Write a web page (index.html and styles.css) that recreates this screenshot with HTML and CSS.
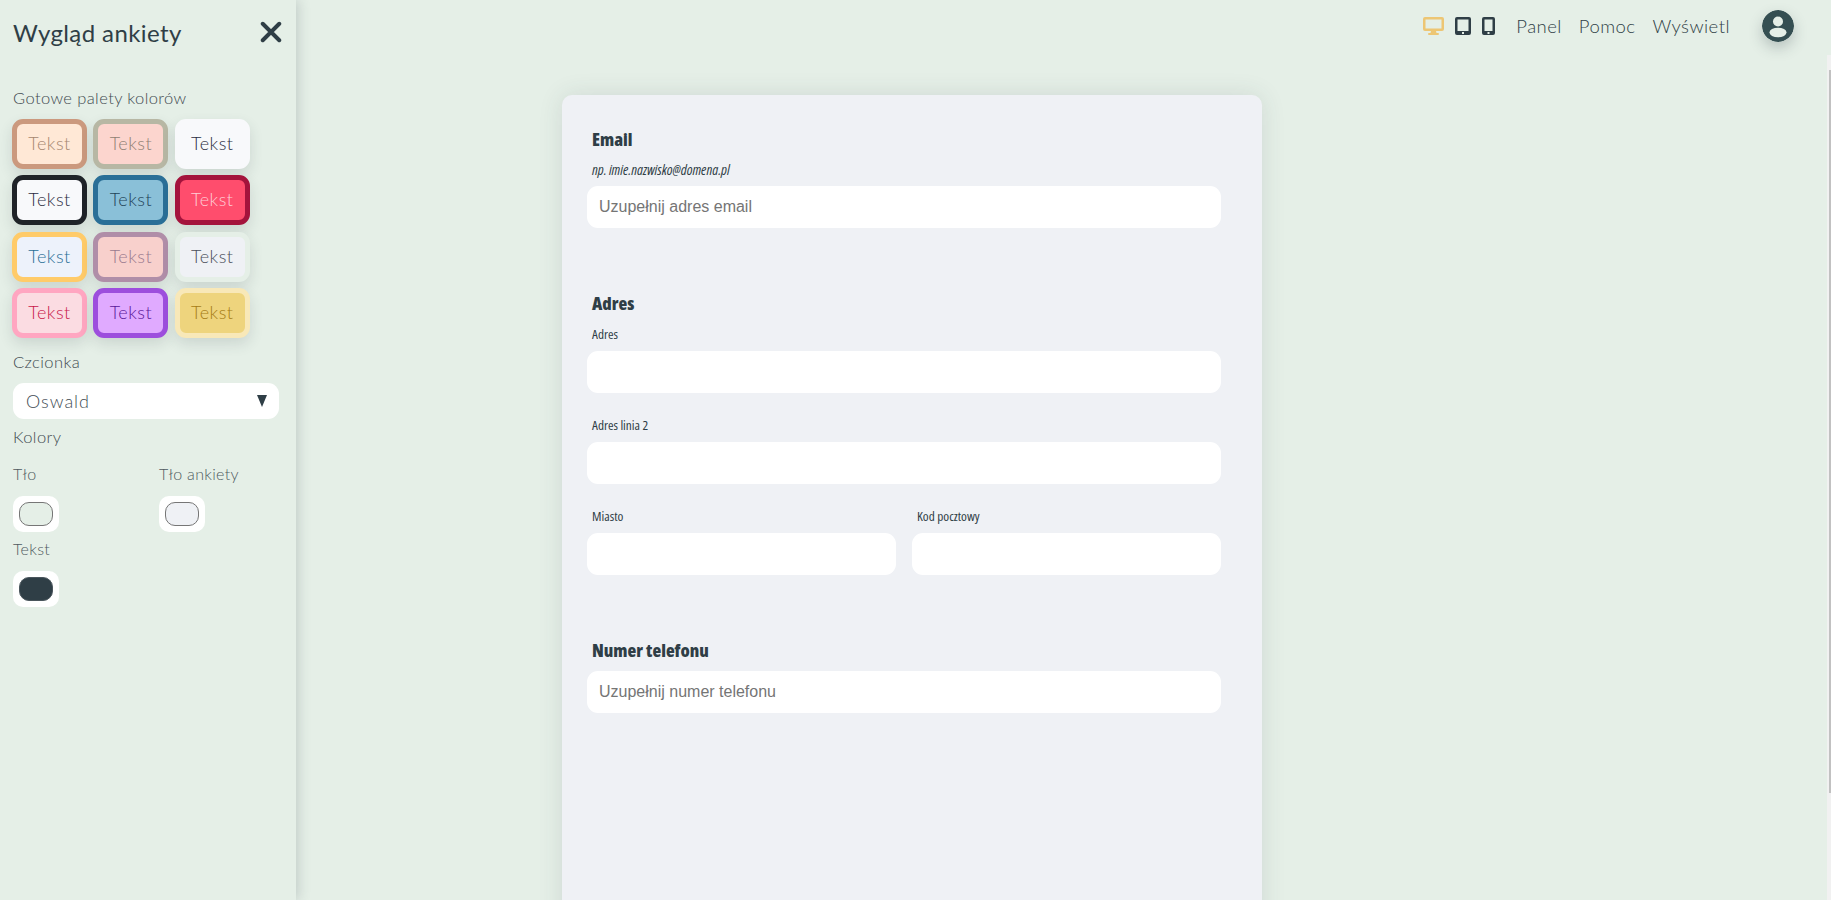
FILE: index.html
```html
<!DOCTYPE html>
<html lang="pl">
<head>
<meta charset="utf-8">
<title>Wygląd ankiety</title>
<link rel="stylesheet" href="styles.css">
</head>
<body>
<div class="app">
  <aside class="sidebar">
    <header class="side-head">
      <h1 class="side-title">Wygląd ankiety</h1>
      <svg class="close" viewBox="0 0 20 20" width="22" height="22"><path d="M2.5 2.5 17.5 17.5M17.5 2.5 2.5 17.5" fill="none" stroke="#2f3e46" stroke-width="3.6" stroke-linecap="round"/></svg>
    </header>
    <p class="side-label first">Gotowe palety kolorów</p>
    <div class="palettes">
      <div class="pal p1">Tekst</div><div class="pal p2">Tekst</div><div class="pal p3">Tekst</div>
      <div class="pal p4">Tekst</div><div class="pal p5">Tekst</div><div class="pal p6">Tekst</div>
      <div class="pal p7">Tekst</div><div class="pal p8">Tekst</div><div class="pal p9">Tekst</div>
      <div class="pal p10">Tekst</div><div class="pal p11">Tekst</div><div class="pal p12">Tekst</div>
    </div>
    <p class="side-label font-label">Czcionka</p>
    <div class="select"><span>Oswald</span><span class="arrow"></span></div>
    <p class="side-label colors-label">Kolory</p>
    <div class="colors">
      <div class="color"><p class="color-name">Tło</p><div class="chip"><div class="chip-in c-bg"></div></div></div>
      <div class="color"><p class="color-name">Tło ankiety</p><div class="chip"><div class="chip-in c-card"></div></div></div>
      <div class="color"><p class="color-name">Tekst</p><div class="chip"><div class="chip-in c-text"></div></div></div>
    </div>
  </aside>
  <div class="main">
    <nav class="topbar">
      <div class="devices">
        <svg class="dev" width="21" height="18" viewBox="0 0 21 18"><path fill="#edc674" fill-rule="evenodd" d="M2 0h17a2 2 0 0 1 2 2v10a2 2 0 0 1-2 2h-6l.5 2H15a1 1 0 0 1 0 2H6a1 1 0 0 1 0-2h1.500L8 14H2a2 2 0 0 1-2-2V2a2 2 0 0 1 2-2Zm.5 2.500V11.500h16V2.500Z"/></svg>
        <svg class="dev" width="16" height="18" viewBox="0 0 16 18"><path fill="#2f3e46" fill-rule="evenodd" d="M2 0h12a2 2 0 0 1 2 2v14a2 2 0 0 1-2 2H2a2 2 0 0 1-2-2V2a2 2 0 0 1 2-2Zm.5 2.500V14h11V2.500ZM7 15h2v2H7Z"/></svg>
        <svg class="dev" width="13" height="18" viewBox="0 0 13 18"><path fill="#2f3e46" fill-rule="evenodd" d="M2 0h9a2 2 0 0 1 2 2v14a2 2 0 0 1-2 2H2a2 2 0 0 1-2-2V2a2 2 0 0 1 2-2Zm.5 2.500V14h8V2.500ZM5.500 15h2v2h-2Z"/></svg>
      </div>
      <a class="nav-link">Panel</a>
      <a class="nav-link">Pomoc</a>
      <a class="nav-link">Wyświetl</a>
      <svg class="avatar" width="32" height="32" viewBox="0 0 32 32"><circle cx="16" cy="16" r="16" fill="#354f52"/><circle cx="16" cy="11.500" r="5" fill="#e5efe7"/><ellipse cx="16" cy="22.500" rx="8.500" ry="4.800" fill="#e5efe7"/></svg>
    </nav>
    <main class="card">
      <section class="block email">
        <h2 class="q-title">Email</h2>
        <p class="hint">np. imie.nazwisko@domena.pl</p>
        <div class="input">Uzupełnij adres email</div>
      </section>
      <section class="block adres">
        <h2 class="q-title">Adres</h2>
        <label class="sub">Adres</label>
        <div class="input"></div>
        <label class="sub">Adres linia 2</label>
        <div class="input"></div>
        <div class="two">
          <div class="col"><label class="sub">Miasto</label><div class="input"></div></div>
          <div class="col"><label class="sub">Kod pocztowy</label><div class="input"></div></div>
        </div>
      </section>
      <section class="block phone">
        <h2 class="q-title">Numer telefonu</h2>
        <div class="input">Uzupełnij numer telefonu</div>
      </section>
    </main>
  </div>
  <div class="scrollbar"><div class="thumb"></div></div>
</div>
</body>
</html>
```

FILE: styles.css
```css
* { box-sizing: border-box; }
html, body { margin: 0; height: 100%; overflow: hidden; }
body { background: #e5efe7; color: #2f3e46; font-family: "Lato", "Liberation Sans", sans-serif; }
p, h1, h2 { margin: 0; }

.app { display: flex; height: 900px; position: relative; overflow: hidden; }

.sidebar {
  width: 296px; flex: none; height: 900px; padding: 0 13px;
  background: #e5efe7; box-shadow: 2px 0 12px rgba(47, 62, 70, .2);
  position: relative; z-index: 2;
}
.side-head { display: flex; align-items: center; justify-content: space-between; height: 64px; padding-right: 1px; }
.side-title { font-family: "Lato", sans-serif; font-size: 24px; font-weight: 400; letter-spacing: .4px; }
.close { margin-top: -1px; }
.side-label { font-size: 16.500px; font-weight: 300; line-height: 20px; color: #3f4a50; letter-spacing: .4px; }
.first { margin-top: 24px; }

.palettes { display: grid; grid-template-columns: repeat(3, 75px); grid-auto-rows: 50px; gap: 6.330px 6.400px; margin: 11px 0 0 -1px; }
.pal {
  border: 5px solid; border-radius: 11px; display: flex; align-items: center; justify-content: center;
  padding-bottom: 2px;
  font-size: 18px; font-weight: 300; letter-spacing: .5px; box-shadow: 0 6px 14px rgba(47, 62, 70, .14);
}
.p1 { background: #ffe8d6; border-color: #cb997e; color: #a5866f; }
.p2 { background: #fcd5ce; border-color: #b7b7a4; color: #8f7f74; }
.p3 { background: #f8f9fb; border-color: #f8f9fb; color: #2b2d42; }
.p4 { background: #f8f9fb; border-color: #1f2328; color: #2b2d42; }
.p5 { background: #8ac0d8; border-color: #2a6f97; color: #1f4458; }
.p6 { background: #ff4d6d; border-color: #a4133c; color: #ffccd5; }
.p7 { background: #edf2fb; border-color: #ffcb69; color: #2a6f97; }
.p8 { background: #f8d0cc; border-color: #b08ea8; color: #9a7b8f; }
.p9 { background: #eff1f5; border-color: #e5efe7; color: #4a4e5a; }
.p10 { background: #fbdce2; border-color: #ffa6c1; color: #c9184a; }
.p11 { background: #e0aaff; border-color: #9d4edd; color: #5a189a; }
.p12 { background: #eed47d; border-color: #f8e8b8; color: #a67c15; }

.font-label { margin-top: 14px; }
.select {
  display: flex; align-items: center; justify-content: space-between;
  width: 266px; height: 36px; margin-top: 11px; padding: 0 12px 0 13px;
  background: #fff; border-radius: 11px; font-size: 18px; font-weight: 300; letter-spacing: 1px; color: #3f4d55;
}
.arrow { width: 0; height: 0; border-left: 5.500px solid transparent; border-right: 5.500px solid transparent; border-top: 12px solid #2f3e46; }
.colors-label { margin-top: 8px; }
.colors { display: grid; grid-template-columns: 146px 1fr; }
.color-name { font-size: 16px; font-weight: 300; line-height: 20px; color: #4f5a60; letter-spacing: .3px; margin-top: 17px; }
.color:nth-child(3) .color-name { margin-top: 7px; }
.chip { width: 46px; height: 36px; margin-top: 12px; padding: 6px; background: #fff; border-radius: 10px; }
.chip-in { width: 34px; height: 24px; border: 1px solid #767676; border-radius: 10px; }
.c-bg { background: #e5efe7; }
.c-card { background: #eff1f5; }
.c-text { background: #2f3e46; border-color: #4a555c; }

.main { flex: 1; min-width: 0; position: relative; }
.topbar { display: flex; align-items: center; justify-content: flex-end; height: 52px; padding-right: 37px; }
.devices { display: flex; align-items: center; gap: 11px; margin-right: 21px; }
.dev { display: block; }
.nav-link { font-size: 18.500px; font-weight: 300; color: #2f3e46; margin-right: 17px; letter-spacing: .45px; }
.nav-link:nth-of-type(3) { margin-right: 32px; }
.avatar { border-radius: 50%; box-shadow: 0 6px 14px rgba(47, 62, 70, .25); }

.card {
  width: 700px; height: 900px; margin: 43px 0 0 266px; padding: 30px 41px 0 25px;
  background: #eff1f5; border-radius: 10px 10px 0 0; box-shadow: 0 0 24px rgba(47, 62, 70, .12);
}
.block { display: flex; flex-direction: column; }
.q-title { font-family: "Open Sans", "Noto Sans", sans-serif; font-stretch: 75%; font-size: 18px; font-weight: 800; line-height: 28px; margin-left: 5px; }
.hint { font-family: "Open Sans", "Noto Sans", sans-serif; font-stretch: 75%; font-size: 14.300px; font-style: italic; font-weight: 500; line-height: 16px; margin: 9px 0 8px 5px; }
.sub { display: block; font-family: "Open Sans", "Noto Sans", sans-serif; font-stretch: 75%; font-size: 13.300px; font-weight: 500; line-height: 16px; margin: 0 0 9px 5px; }
.input {
  height: 42px; padding: 0 12px; background: #fff; border-radius: 11px;
  display: flex; align-items: center; font-family: "Liberation Sans", sans-serif; font-size: 16px; color: #757575;
}
.adres { margin-top: 61px; }
.adres .q-title + .sub { margin-top: 9px; }
.adres .input + .sub { margin-top: 24px; }
.two { display: grid; grid-template-columns: 1fr 1fr; gap: 16px; margin-top: 24px; }
.phone { margin-top: 61px; }
.phone .q-title { margin-bottom: 7px; }

.scrollbar { position: absolute; right: 0; top: 55px; bottom: 0; width: 4px; background: #f1f1f1; }
.thumb { width: 2px; height: 723px; margin: 15px 0 0 2px; background: #c1c1c1; }
```
